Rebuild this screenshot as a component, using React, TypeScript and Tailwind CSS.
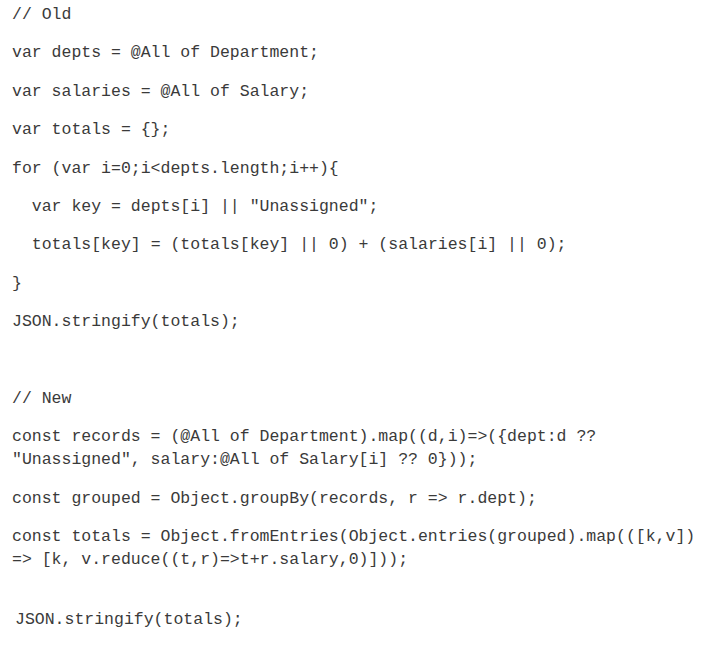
const oldLines = [
  "// Old",
  "var depts = @All of Department;",
  "var salaries = @All of Salary;",
  "var totals = {};",
  "for (var i=0;i<depts.length;i++){",
  "  var key = depts[i] || \"Unassigned\";",
  "  totals[key] = (totals[key] || 0) + (salaries[i] || 0);",
  "}",
  "JSON.stringify(totals);",
];

const newLines = [
  "// New",
  "const records = (@All of Department).map((d,i)=>({dept:d ?? \"Unassigned\", salary:@All of Salary[i] ?? 0}));",
  "const grouped = Object.groupBy(records, r => r.dept);",
  "const totals = Object.fromEntries(Object.entries(grouped).map(([k,v]) => [k, v.reduce((t,r)=>t+r.salary,0)]));",
];

export default function App() {
  return (
    <div className="min-h-[645px] bg-white px-[12px] pt-[3px] font-['Liberation_Mono',monospace] text-[16.5px] leading-[23px] text-[#3a3a3a]">
      <div className="flex flex-col gap-[15.4px]">
        {oldLines.map((l) => <p key={l} className="whitespace-pre-wrap">{l}</p>)}
        <p className="h-[23px]" />
        {newLines.map((l) => <p key={l} className="whitespace-pre-wrap">{l}</p>)}
      </div>
      <p className="mt-[37px] pl-[3px]">JSON.stringify(totals);</p>
    </div>
  );
}
